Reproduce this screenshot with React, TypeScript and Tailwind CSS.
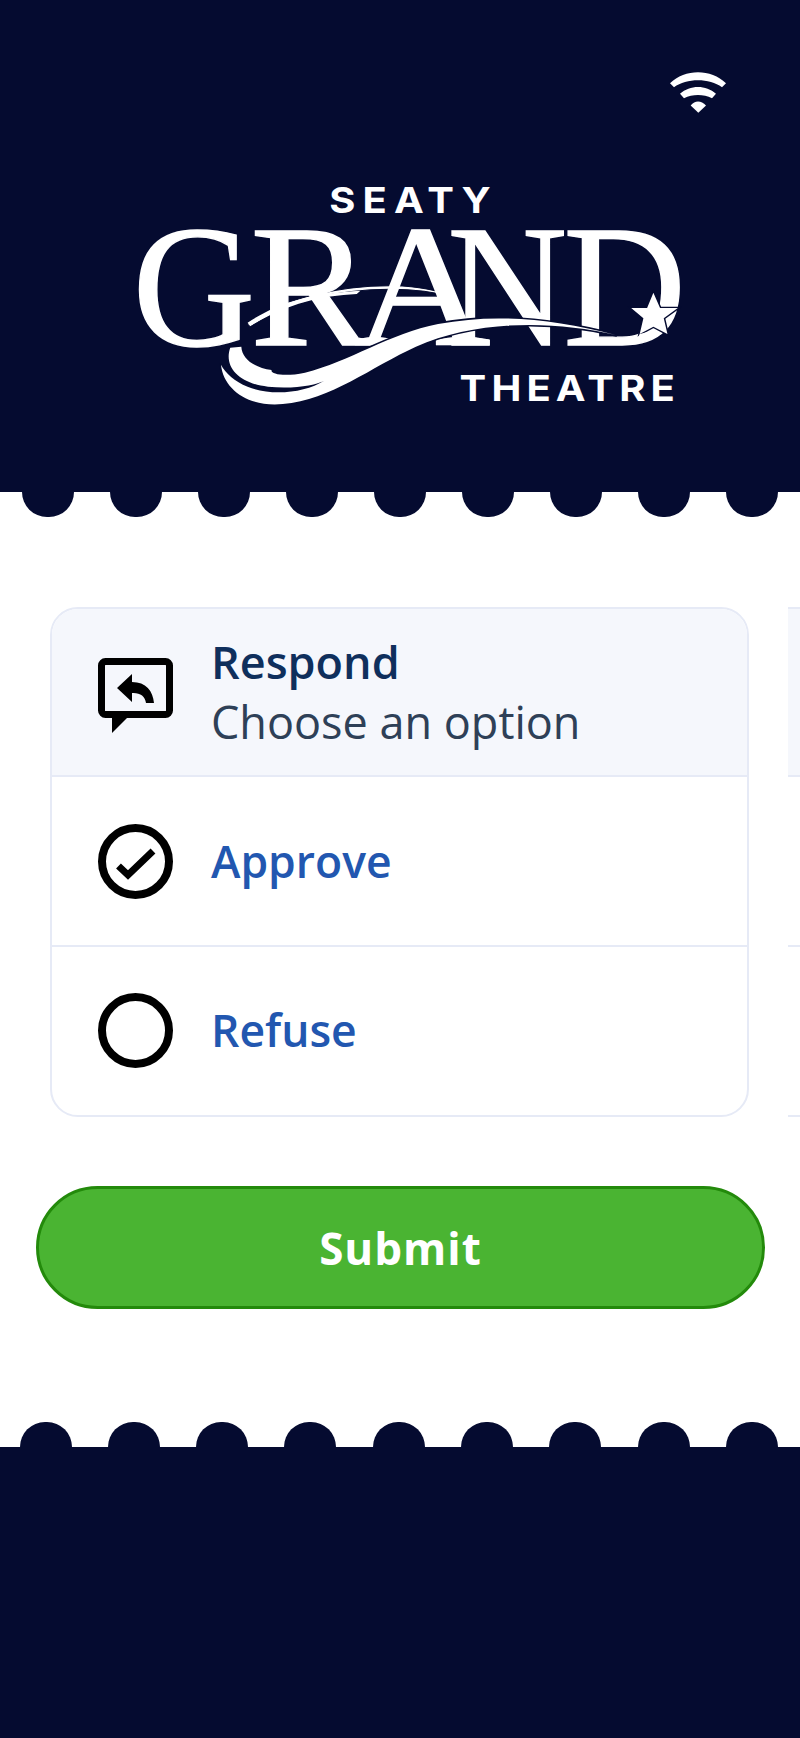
const scallops = [0, 1, 2, 3, 4, 5, 6, 7, 8];

function WifiIcon() {
  return (
    <svg width="56" height="41" viewBox="0 0 168 122" fill="#ffffff">
      <path d="M0 33 C45 -11 123 -11 168 33 L156 45 C118 17 50 17 12 45 Z" />
      <path d="M30 65 C60 38 108 38 138 65 L126 78 C100 65 68 65 42 78 Z" />
      <path d="M62 100 C75 84 93 84 108 100 L85 122 Z" />
    </svg>
  );
}

function Logo() {
  return (
    <svg width="580" height="250" viewBox="0 0 1568 750" preserveAspectRatio="none">
      <g fontFamily="'Inter', sans-serif" fontWeight="700" fontSize="108" fill="#ffffff">
        <text x="566" y="130" textLength="436" lengthAdjust="spacing">SEATY</text>
        <text x="918" y="692" textLength="582" lengthAdjust="spacing">THEATRE</text>
      </g>
      <path d="M345 462 C430 385 600 345 740 347 C800 348 860 360 900 382 C850 365 790 358 730 358 C610 358 470 385 352 470 Z" fill="#ffffff" stroke="#050b30" strokeWidth="3" />
      <g fontFamily="'Liberation Serif', serif" fontSize="522" fill="#ffffff" stroke="#ffffff" strokeWidth="4">
        <text transform="translate(34 526) scale(0.88 1)">G</text>
        <text transform="translate(352 526) scale(0.94 1)">R</text>
        <text transform="translate(632 526) scale(0.98 1)">A</text>
        <text transform="translate(885 526) scale(0.86 1)">N</text>
        <text transform="translate(1198 526) scale(0.88 1)">D</text>
      </g>
      <path d="M345 458 C430 395 520 370 650 362 L640 372 C540 378 450 402 352 468 Z" fill="#ffffff" />
      <path d="M1340 495 C1170 445 1010 430 860 462 C730 490 620 575 500 608 C440 622 405 610 410 600 C360 592 330 565 328 530 L298 533 C280 590 320 640 400 650 C470 658 530 645 552 632 C500 668 410 680 345 650 C310 634 285 610 273 584 C280 660 350 712 440 702 C570 690 680 590 800 530 C960 450 1170 450 1340 495 Z" fill="#ffffff" stroke="#050b30" strokeWidth="10" strokeLinejoin="round" paintOrder="stroke" />
      <path d="M1442 368 L1460 414 L1508 414 L1470 445 L1480 492 L1442 470 L1405 492 L1415 445 L1382 414 L1425 414 Z" fill="#ffffff" stroke="#050b30" strokeWidth="8" paintOrder="stroke" />
      <path d="M1405 492 L1392 518 L1440 482 Z" fill="#ffffff" />
    </svg>
  );
}

function ReplyIcon() {
  return (
    <svg width="75" height="75" viewBox="0 0 75 75" className="mt-[6px] shrink-0">
      <rect x="3.5" y="3.5" width="68" height="53" rx="4" fill="none" stroke="#000000" strokeWidth="7" />
      <path d="M14 58 V75 L30 59 Z" fill="#000000" />
      <path d="M34 16 L19 30 L34 44 V35 C42 34.5 47 38 48 45 H56 C55 33 48 24 34 24 Z" fill="#000000" />
    </svg>
  );
}

function CheckIcon({ checked }: { checked: boolean }) {
  return (
    <svg width="75" height="75" viewBox="0 0 75 75" className="shrink-0">
      <circle cx="37.5" cy="37.5" r="33.5" fill="none" stroke="#000000" strokeWidth="8" />
      {checked && <path d="M20.5 42 L30 51 L55 27" fill="none" stroke="#000000" strokeWidth="7" />}
    </svg>
  );
}

function OptionRow({ label, checked, height }: { label: string; checked: boolean; height: string }) {
  return (
    <div className={`flex items-center gap-[38px] pl-[46px] ${height}`}>
      <CheckIcon checked={checked} />
      <span className="text-[44.5px] leading-[60px] font-semibold text-[#2257b0]">{label}</span>
    </div>
  );
}

export default function App() {
  return (
    <div className="flex min-h-[1738px] flex-col bg-white font-['Open_Sans',sans-serif]">
      <header className="flex h-[492px] flex-col bg-[#050b30]">
        <div className="flex justify-end pt-[72px] pr-[74px]">
          <WifiIcon />
        </div>
        <div className="mt-[57px] ml-[120px]">
          <Logo />
        </div>
      </header>
      <div className="flex justify-between px-[22px]">
        {scallops.map((n) => (
          <div key={n} className="h-[25px] w-[52px] rounded-b-[26px] bg-[#050b30]" />
        ))}
      </div>

      <main className="mt-[90px] flex-1">
        <div className="flex gap-[39px] overflow-hidden pl-[50px]">
          <section className="w-[699px] shrink-0 overflow-hidden rounded-[28px] border-2 border-[#e6eaf6]">
            <div className="flex h-[168px] items-center gap-[38px] border-b-2 border-[#e6eaf6] bg-[#f5f7fc] pl-[46px]">
              <ReplyIcon />
              <div>
                <p className="text-[45px] leading-[60px] font-semibold text-[#0f2f5c]">Respond</p>
                <p className="text-[45px] leading-[60px] text-[#2e4057]">Choose an option</p>
              </div>
            </div>
            <div className="border-b-2 border-[#e6eaf6]">
              <OptionRow label="Approve" checked height="h-[168px]" />
            </div>
            <OptionRow label="Refuse" checked={false} height="h-[166px]" />
          </section>
          <section className="h-[510px] w-[699px] shrink-0 border-y-2 border-[#e6eaf6]">
            <div className="h-[168px] border-b-2 border-[#e6eaf6] bg-[#f5f7fc]" />
            <div className="h-[170px] border-b-2 border-[#e6eaf6]" />
          </section>
        </div>

        <div className="mt-[69px] px-[36px]">
          <button className="flex h-[123px] w-[729px] items-center justify-center rounded-full border-[3px] border-[#238a0b] bg-[#4ab432] text-[44px] font-bold tracking-[1px] text-white">
            Submit
          </button>
        </div>
      </main>

      <div className="flex justify-between pr-[22px] pl-[19.5px]">
        {scallops.map((n) => (
          <div key={n} className="h-[25px] w-[52px] rounded-t-[26px] bg-[#050b30]" />
        ))}
      </div>
      <footer className="h-[291px] bg-[#050b30]" />
    </div>
  );
}
